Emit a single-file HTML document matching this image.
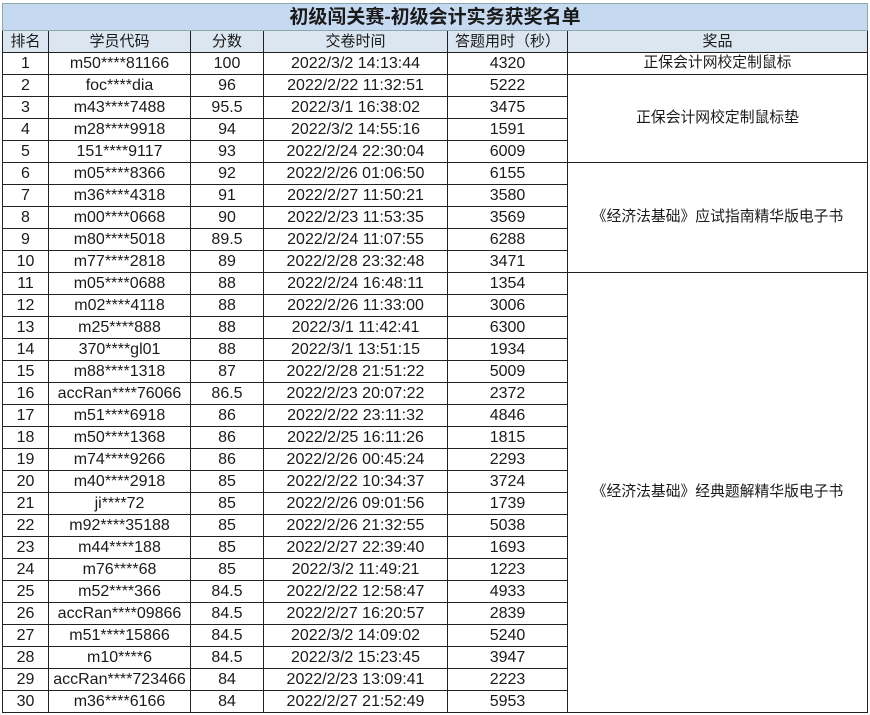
<!DOCTYPE html>
<html><head><meta charset="utf-8"><style>
body{margin:0;background:#fff;width:870px;height:715px;overflow:hidden;font-family:"Liberation Sans","Noto Sans CJK SC",sans-serif;color:#1a1a1a}
table{position:absolute;left:2px;top:3px;border-collapse:collapse;table-layout:fixed}
td{border:1px solid #222;text-align:center;height:21px;padding:0;font-size:16px;line-height:21px;white-space:nowrap;overflow:hidden}
td.c{font-size:14.8px}
tr.t td{height:26px;background:#c5d9f1;font-weight:bold;font-size:19px;border-color:#8aa}
tr.h td{background:#dce6f1;font-size:15px}
</style></head><body>
<table>
<colgroup><col style="width:46px"><col style="width:142px"><col style="width:73px"><col style="width:184px"><col style="width:120px"><col style="width:300px"></colgroup>
<tr class="t"><td colspan="6">初级闯关赛-初级会计实务获奖名单</td></tr>
<tr class="h"><td>排名</td><td>学员代码</td><td>分数</td><td>交卷时间</td><td>答题用时（秒）</td><td>奖品</td></tr>
<tr><td>1</td><td>m50****81166</td><td>100</td><td>2022/3/2 14:13:44</td><td>4320</td><td class="c">正保会计网校定制鼠标</td></tr>
<tr><td>2</td><td>foc****dia</td><td>96</td><td>2022/2/22 11:32:51</td><td>5222</td><td class="c" rowspan="4">正保会计网校定制鼠标垫</td></tr>
<tr><td>3</td><td>m43****7488</td><td>95.5</td><td>2022/3/1 16:38:02</td><td>3475</td></tr>
<tr><td>4</td><td>m28****9918</td><td>94</td><td>2022/3/2 14:55:16</td><td>1591</td></tr>
<tr><td>5</td><td>151****9117</td><td>93</td><td>2022/2/24 22:30:04</td><td>6009</td></tr>
<tr><td>6</td><td>m05****8366</td><td>92</td><td>2022/2/26 01:06:50</td><td>6155</td><td class="c" rowspan="5">《经济法基础》应试指南精华版电子书</td></tr>
<tr><td>7</td><td>m36****4318</td><td>91</td><td>2022/2/27 11:50:21</td><td>3580</td></tr>
<tr><td>8</td><td>m00****0668</td><td>90</td><td>2022/2/23 11:53:35</td><td>3569</td></tr>
<tr><td>9</td><td>m80****5018</td><td>89.5</td><td>2022/2/24 11:07:55</td><td>6288</td></tr>
<tr><td>10</td><td>m77****2818</td><td>89</td><td>2022/2/28 23:32:48</td><td>3471</td></tr>
<tr><td>11</td><td>m05****0688</td><td>88</td><td>2022/2/24 16:48:11</td><td>1354</td><td class="c" rowspan="20">《经济法基础》经典题解精华版电子书</td></tr>
<tr><td>12</td><td>m02****4118</td><td>88</td><td>2022/2/26 11:33:00</td><td>3006</td></tr>
<tr><td>13</td><td>m25****888</td><td>88</td><td>2022/3/1 11:42:41</td><td>6300</td></tr>
<tr><td>14</td><td>370****gl01</td><td>88</td><td>2022/3/1 13:51:15</td><td>1934</td></tr>
<tr><td>15</td><td>m88****1318</td><td>87</td><td>2022/2/28 21:51:22</td><td>5009</td></tr>
<tr><td>16</td><td>accRan****76066</td><td>86.5</td><td>2022/2/23 20:07:22</td><td>2372</td></tr>
<tr><td>17</td><td>m51****6918</td><td>86</td><td>2022/2/22 23:11:32</td><td>4846</td></tr>
<tr><td>18</td><td>m50****1368</td><td>86</td><td>2022/2/25 16:11:26</td><td>1815</td></tr>
<tr><td>19</td><td>m74****9266</td><td>86</td><td>2022/2/26 00:45:24</td><td>2293</td></tr>
<tr><td>20</td><td>m40****2918</td><td>85</td><td>2022/2/22 10:34:37</td><td>3724</td></tr>
<tr><td>21</td><td>ji****72</td><td>85</td><td>2022/2/26 09:01:56</td><td>1739</td></tr>
<tr><td>22</td><td>m92****35188</td><td>85</td><td>2022/2/26 21:32:55</td><td>5038</td></tr>
<tr><td>23</td><td>m44****188</td><td>85</td><td>2022/2/27 22:39:40</td><td>1693</td></tr>
<tr><td>24</td><td>m76****68</td><td>85</td><td>2022/3/2 11:49:21</td><td>1223</td></tr>
<tr><td>25</td><td>m52****366</td><td>84.5</td><td>2022/2/22 12:58:47</td><td>4933</td></tr>
<tr><td>26</td><td>accRan****09866</td><td>84.5</td><td>2022/2/27 16:20:57</td><td>2839</td></tr>
<tr><td>27</td><td>m51****15866</td><td>84.5</td><td>2022/3/2 14:09:02</td><td>5240</td></tr>
<tr><td>28</td><td>m10****6</td><td>84.5</td><td>2022/3/2 15:23:45</td><td>3947</td></tr>
<tr><td>29</td><td>accRan****723466</td><td>84</td><td>2022/2/23 13:09:41</td><td>2223</td></tr>
<tr><td>30</td><td>m36****6166</td><td>84</td><td>2022/2/27 21:52:49</td><td>5953</td></tr>
</table>
</body></html>
